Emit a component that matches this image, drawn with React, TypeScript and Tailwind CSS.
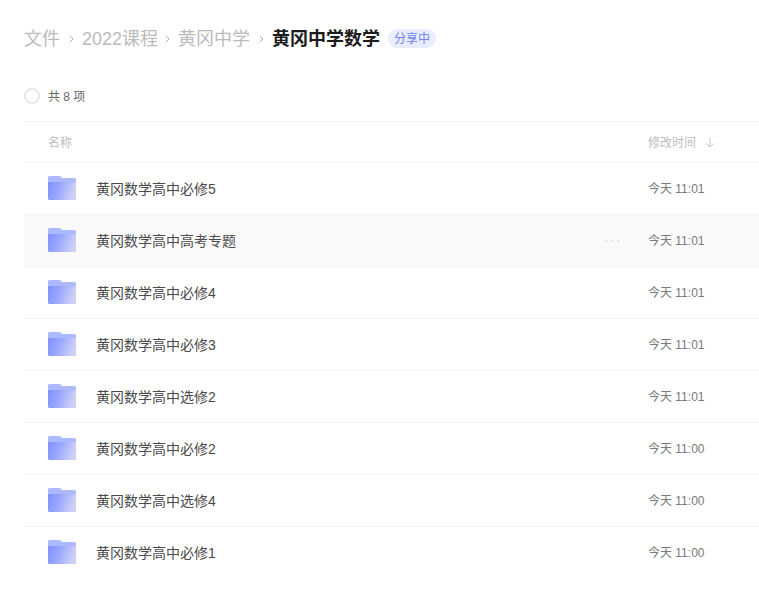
const FONT = "font-['Liberation_Sans','Noto_Sans_CJK_SC',sans-serif]";

const files = [
  { name: "黄冈数学高中必修5", time: "今天 11:01" },
  { name: "黄冈数学高中高考专题", time: "今天 11:01", hover: true },
  { name: "黄冈数学高中必修4", time: "今天 11:01" },
  { name: "黄冈数学高中必修3", time: "今天 11:01" },
  { name: "黄冈数学高中选修2", time: "今天 11:01" },
  { name: "黄冈数学高中必修2", time: "今天 11:00" },
  { name: "黄冈数学高中选修4", time: "今天 11:00" },
  { name: "黄冈数学高中必修1", time: "今天 11:00" },
];

function FolderIcon({ id }: { id: string }) {
  return (
    <svg width="28" height="24" viewBox="0 0 28 24" className="-mt-px shrink-0">
      <defs>
        <linearGradient id={id} x1="0" y1="0" x2="1" y2="0.25">
          <stop offset="0" stopColor="#7d91ff" />
          <stop offset="0.45" stopColor="#98a6fd" />
          <stop offset="1" stopColor="#cdd0f5" />
        </linearGradient>
      </defs>
      <path d="M0 1.5A1.5 1.5 0 0 1 1.5 0H12l2 2h12.5A1.5 1.5 0 0 1 28 3.5V8H0z" fill="#abb9ff" />
      <path d="M0 6h28v16.5a1.5 1.5 0 0 1-1.5 1.5h-25A1.5 1.5 0 0 1 0 22.5z" fill={`url(#${id})`} />
    </svg>
  );
}

function Chevron() {
  return (
    <svg width="5" height="8" viewBox="0 0 5 8" className="mx-[8px] mt-px shrink-0">
      <path d="M1 1l3 3-3 3" fill="none" stroke="#b0b0b0" strokeWidth="1" />
    </svg>
  );
}

export default function App() {
  return (
    <div className={`${FONT} h-[603px] w-[759px] overflow-hidden bg-white pl-6`}>
      {/* breadcrumb */}
      <div className="flex h-[76px] items-center pt-px text-[18px] leading-none text-[#bbbbbb]">
        <span className="mr-px">文件</span>
        <Chevron />
        <span className="-mr-px">2022课程</span>
        <Chevron />
        <span className="mr-px">黄冈中学</span>
        <Chevron />
        <span className="font-bold text-[#1c1c1c]">黄冈中学数学</span>
        <span className="ml-2 flex h-[19px] w-12 items-center justify-center rounded-full bg-[#e9edff] text-xs text-[#6f82f0]">
          分享中
        </span>
      </div>

      {/* selection summary */}
      <div className="flex h-[45px] items-center pb-[5px]">
        <span className="h-4 w-4 rounded-full border-2 border-[#e6e6e6]" />
        <span className="ml-2 mt-px text-xs text-[#666666]">共 8 项</span>
      </div>

      {/* table head */}
      <div className="flex h-[41px] items-center border-t border-[#f2f2f2] pt-px text-xs text-[#bcbcbc]">
        <span className="ml-6 flex-1">名称</span>
        <span className="flex w-[111px] items-center">
          修改时间
          <svg width="10" height="11" viewBox="0 0 10 11" className="ml-[9px]">
            <path d="M5 0.5v9.5M1.5 6.5L5 10l3.5-3.5" fill="none" stroke="#c6c6c6" strokeWidth="1" />
          </svg>
        </span>
      </div>

      {/* rows */}
      {files.map((file, i) => (
        <div
          key={file.name}
          className={`flex h-[52px] items-center border-t border-[#f5f5f5] ${file.hover ? "bg-[#fafafa]" : ""}`}
        >
          <div className="ml-6 flex flex-1 items-center gap-5">
            <FolderIcon id={`folder-${i}`} />
            <span className="text-sm text-[#4a4a4a]">{file.name}</span>
          </div>
          {file.hover && (
            <div className="mr-[28px] flex gap-[3px]">
              <span className="h-[3px] w-[3px] rounded-full bg-[#e6e6e6]" />
              <span className="h-[3px] w-[3px] rounded-full bg-[#e6e6e6]" />
              <span className="h-[3px] w-[3px] rounded-full bg-[#e6e6e6]" />
            </div>
          )}
          <span className="w-[111px] text-xs text-[#7a7a7a]">{file.time}</span>
        </div>
      ))}
    </div>
  );
}
